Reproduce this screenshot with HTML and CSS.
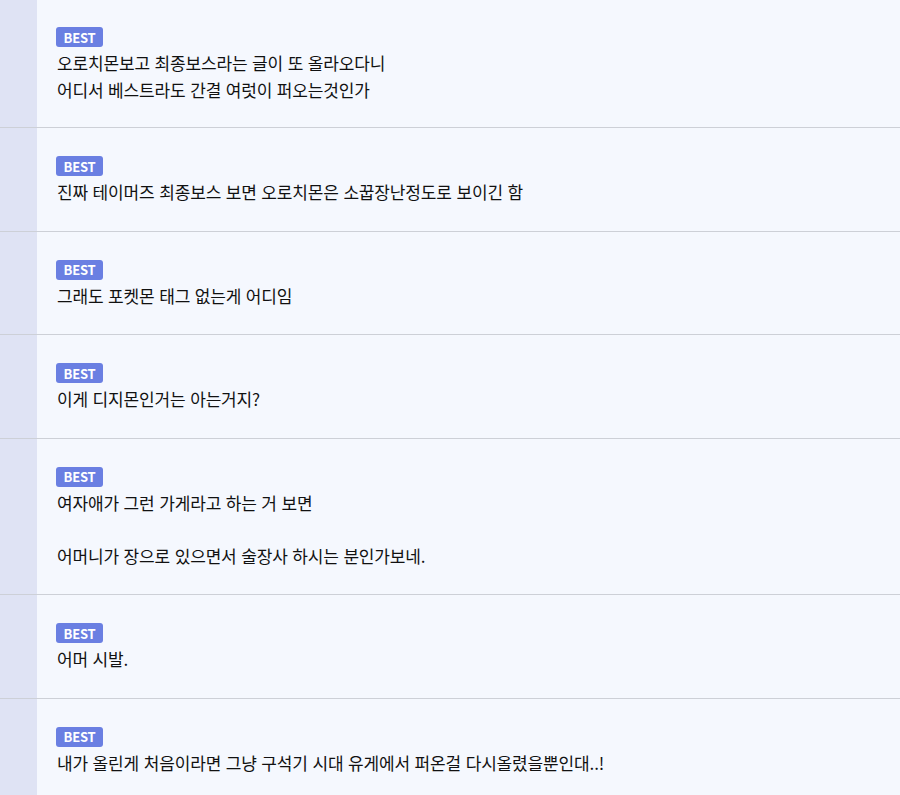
FILE: index.html
```html
<!DOCTYPE html>
<html lang="ko">
<head>
<meta charset="utf-8">
<title>Best comments</title>
<link rel="stylesheet" href="styles.css">
</head>
<body>
<ul class="list">
  <li class="item first">
    <div class="strip"></div>
    <div class="content">
      <span class="badge">BEST</span>
      <p class="text">오로치몬보고 최종보스라는 글이 또 올라오다니<br>어디서 베스트라도 간결 여럿이 퍼오는것인가</p>
    </div>
  </li>
  <li class="item">
    <div class="strip"></div>
    <div class="content">
      <span class="badge">BEST</span>
      <p class="text">진짜 테이머즈 최종보스 보면 오로치몬은 소꿉장난정도로 보이긴 함</p>
    </div>
  </li>
  <li class="item">
    <div class="strip"></div>
    <div class="content">
      <span class="badge">BEST</span>
      <p class="text">그래도 포켓몬 태그 없는게 어디임</p>
    </div>
  </li>
  <li class="item">
    <div class="strip"></div>
    <div class="content">
      <span class="badge">BEST</span>
      <p class="text">이게 디지몬인거는 아는거지?</p>
    </div>
  </li>
  <li class="item">
    <div class="strip"></div>
    <div class="content">
      <span class="badge">BEST</span>
      <p class="text">여자애가 그런 가게라고 하는 거 보면<br><br>어머니가 장으로 있으면서 술장사 하시는 분인가보네.</p>
    </div>
  </li>
  <li class="item">
    <div class="strip"></div>
    <div class="content">
      <span class="badge">BEST</span>
      <p class="text">어머 시발.</p>
    </div>
  </li>
  <li class="item">
    <div class="strip"></div>
    <div class="content">
      <span class="badge">BEST</span>
      <p class="text">내가 올린게 처음이라면 그냥 구석기 시대 유게에서 퍼온걸 다시올렸을뿐인대..!</p>
    </div>
  </li>
</ul>
</body>
</html>
```

FILE: styles.css
```css
html, body {
  margin: 0;
  padding: 0;
  background: #f5f8fe;
}

body {
  font-family: "Noto Sans CJK KR", "Noto Sans", sans-serif;
  color: #111111;
  overflow: hidden;
}

.list {
  list-style: none;
  margin: 0;
  padding: 0;
}

.item {
  display: flex;
  border-bottom: 1px solid #cdd0d7;
}

.strip {
  width: 37px;
  flex: none;
  background: #dfe3f4;
}

.content {
  flex: 1;
  display: flex;
  flex-direction: column;
  align-items: flex-start;
  gap: 3px;
  padding: 28px 0 25px 19px;
}

.first .content {
  padding-top: 27px;
  padding-bottom: 24px;
}

.badge {
  display: inline-flex;
  align-items: center;
  justify-content: center;
  width: 47px;
  height: 20px;
  border-radius: 3px;
  background: #6a7fe2;
  color: #ffffff;
  font-family: "Noto Sans CJK KR", "Noto Sans", sans-serif;
  font-weight: 600;
  font-size: 13px;
  letter-spacing: -0.2px;
  line-height: 1;
}

.text {
  margin: 0 0 0 1px;
  font-size: 17px;
  line-height: 26.5px;
  letter-spacing: -0.15px;
}
```
